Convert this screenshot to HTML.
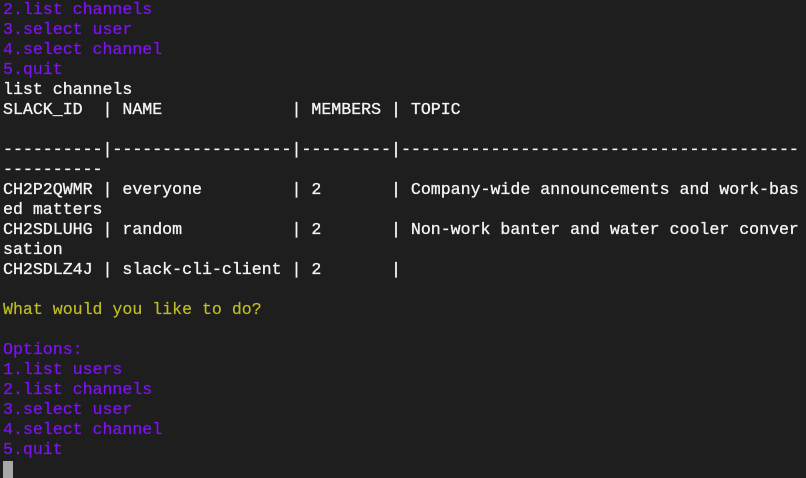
<!DOCTYPE html>
<html><head><meta charset="utf-8"><style>
html,body{margin:0;padding:0;background:#1e1e1e;width:806px;height:478px;overflow:hidden}
pre{margin:0;padding:0 0 0 3px;font-family:"Liberation Mono",monospace;font-size:16.58px;line-height:20px;color:#f4f4f4;white-space:pre;-webkit-text-stroke:0.3px #f4f4f4}
.p{color:#8010f8;-webkit-text-stroke:0.2px #8010f8}.y{color:#bdbd24;-webkit-text-stroke:0.2px #bdbd24}
.c{display:inline-block;width:10px;height:18px;background:#a8a8a8;vertical-align:top;margin-top:1px}
</style></head><body><pre><span class="p">2.list channels
3.select user
4.select channel
5.quit</span>
list channels
SLACK_ID  | NAME             | MEMBERS | TOPIC

----------|------------------|---------|----------------------------------------
----------
CH2P2QWMR | everyone         | 2       | Company-wide announcements and work-bas
ed matters
CH2SDLUHG | random           | 2       | Non-work banter and water cooler conver
sation
CH2SDLZ4J | slack-cli-client | 2       |

<span class="y">What would you like to do?</span>

<span class="p">Options:
1.list users
2.list channels
3.select user
4.select channel
5.quit</span>
<span class="c"></span></pre></body></html>
